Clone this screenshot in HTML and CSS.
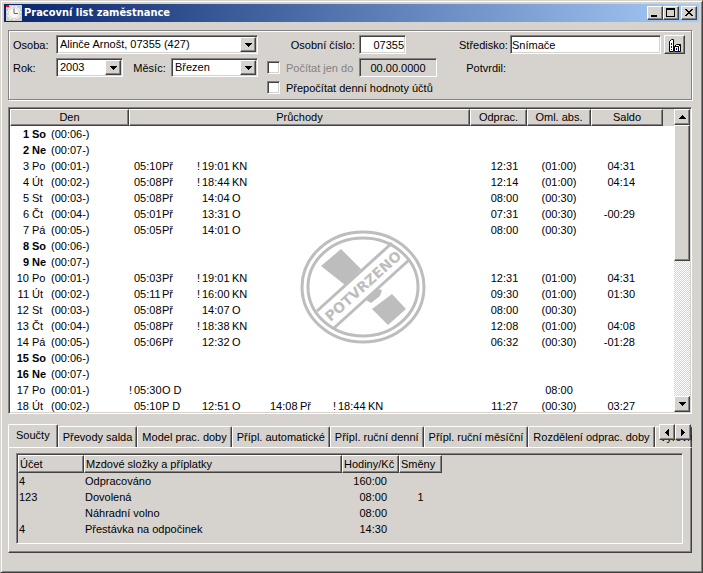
FILE: index.html
```html
<!DOCTYPE html>
<html lang="cs">
<head>
<meta charset="utf-8">
<title>Pracovní list zaměstnance</title>
<link rel="stylesheet" href="styles.css">
</head>
<body>
<main class="window">
  <header class="titlebar">
    <svg class="app-icon" viewBox="0 0 16 16" aria-hidden="true">
      <rect width="16" height="16" fill="#d0d0d0"/>
      <circle cx="8" cy="8" r="7" fill="#fff" stroke="#b8b8b8" stroke-dasharray="2 2"/>
      <circle cx="8" cy="8" r="5.500" fill="#f8f8f8" stroke="#d0d0d0"/>
      <path d="M8 3.500V8.500h4" fill="none" stroke="#666"/>
      <path d="M0 0h3v2h-3z" fill="#f00"/>
    </svg>
    <h1>Pracovní list zaměstnance</h1>
    <button class="raised caption" aria-label="Minimalizovat"><svg viewBox="0 0 12 10"><path d="M2 7h6v2h-6z"/></svg></button>
    <button class="raised caption" aria-label="Maximalizovat"><svg viewBox="0 0 12 10"><path d="M1 0h9v9H1zM2 2v6h7V2z" fill-rule="evenodd"/></svg></button>
    <button class="raised caption close" aria-label="Zavřít"><svg viewBox="0 0 12 10"><path d="M2 1h2v1h1v1h2V2h1V1h2v1H9v1H8v1H7v1h1v1h1v1h1v1H8V7H7V6H5v1H4v1H2V7h1V6h1V5h1V4H4V3H3V2H2z"/></svg></button>
  </header>

  <form class="filters">
    <label for="osoba">Osoba:</label>
    <span class="combo"><select id="osoba"><option>Alinče Arnošt, 07355 (427)</option></select><span class="raised drop"><svg viewBox="0 0 7 4"><path d="M0 0h7v1H6v1H5v1H4v1H3V3H2V2H1V1H0z"/></svg></span></span>
    <label class="right" for="cislo">Osobní číslo:</label>
    <input class="field number" id="cislo" value="07355">
    <label class="right" for="stredisko">Středisko:</label>
    <input class="field" id="stredisko" value="Snímače">
    <button type="button" class="raised lookup" aria-label="Vybrat středisko">
      <svg viewBox="0 0 14 14"><path d="M1.500 3.500l2-2h2v12h-4z" fill="#fff" stroke="#000"/><path d="M6.500 8.500l2-2h4v7h-6z" fill="#fff" stroke="#000"/><path d="M6.500 8.500h4l2-2M10.500 8.500v5" stroke="#000" fill="none"/><path d="M3 5h1v2H3zM3 8h1v2H3zM3 11h1v1H3zM8 10h1v2H8z" fill="#00f"/></svg>
    </button>

    <label for="rok">Rok:</label>
    <div class="period">
      <span class="combo year"><select id="rok"><option>2003</option></select><span class="raised drop"><svg viewBox="0 0 7 4"><path d="M0 0h7v1H6v1H5v1H4v1H3V3H2V2H1V1H0z"/></svg></span></span>
      <label for="mesic">Měsíc:</label>
      <span class="combo month"><select id="mesic"><option>Březen</option></select><span class="raised drop"><svg viewBox="0 0 7 4"><path d="M0 0h7v1H6v1H5v1H4v1H3V3H2V2H1V1H0z"/></svg></span></span>
    </div>
    <label class="check dim"><input type="checkbox">Počítat jen do</label>
    <input class="field date" aria-label="Počítat do data" value="00.00.0000" readonly>
    <span class="right">Potvrdil:</span>

    <label class="check wide"><input type="checkbox">Přepočítat denní hodnoty účtů</label>
  </form>

  <section class="days">
    <div class="days-view">
      <table class="grid">
        <colgroup><col class="c-day"><col><col class="c-work"><col class="c-abs"><col class="c-saldo"><col class="c-rest"></colgroup>
        <thead><tr><th>Den</th><th>Průchody</th><th>Odprac.</th><th>Oml. abs.</th><th>Saldo</th><td></td></tr></thead>
        <tbody id="days"></tbody>
      </table>
      <svg class="stamp" viewBox="0 0 126 116" role="img" aria-label="Potvrzeno">
        <g fill="none" stroke="#bdbdbd" stroke-width="3">
          <ellipse cx="63" cy="58" rx="61" ry="55"/>
          <ellipse cx="63" cy="58" rx="55" ry="49"/>
          <path d="M17 82L92 14M34 99L109 31"/>
        </g>
        <g fill="#bdbdbd">
          <path d="M21 37L41 20l20 20L45 56z"/>
          <path d="M72 80L92 65l14 15L88 96zM66 71l12-11 4 1-2 6-9 7z"/>
          <text x="63" y="62" text-anchor="middle" transform="rotate(-42 63 57)">POTVRZENO</text>
        </g>
      </svg>
    </div>
    <div class="scrollbar">
      <button class="raised" aria-label="Nahoru"><svg viewBox="0 0 7 4"><path d="M3 0h1v1h1v1h1v1h1v1H0V3h1V2h1V1h1z"/></svg></button>
      <div class="track"><div class="raised thumb"></div></div>
      <button class="raised" aria-label="Dolů"><svg viewBox="0 0 7 4"><path d="M0 0h7v1H6v1H5v1H4v1H3V3H2V2H1V1H0z"/></svg></button>
    </div>
  </section>

  <section class="totals">
    <nav class="tabs" role="tablist">
      <button class="tab active" role="tab" aria-selected="true">Součty</button>
      <button class="tab" role="tab">Převody salda</button>
      <button class="tab" role="tab">Model prac. doby</button>
      <button class="tab" role="tab">Přípl. automatické</button>
      <button class="tab" role="tab">Přípl. ruční denní</button>
      <button class="tab" role="tab">Přípl. ruční měsíční</button>
      <button class="tab" role="tab">Rozdělení odprac. doby</button>
      <button class="tab last" role="tab">Vyrovn</button>
      <span class="tab-scroll">
        <button class="raised" aria-label="Předchozí záložky"><svg viewBox="0 0 4 7"><path d="M4 0v7H3V6H2V5H1V4H0V3h1V2h1V1h1V0z"/></svg></button>
        <button class="raised" aria-label="Další záložky"><svg viewBox="0 0 4 7"><path d="M0 0v7h1V6h1V5h1V4h1V3H3V2H2V1H1V0z"/></svg></button>
      </span>
    </nav>
    <div class="panel">
      <div class="sums-view">
        <table class="grid sums">
          <colgroup><col class="s-account"><col class="s-item"><col class="s-hours"><col class="s-shifts"></colgroup>
          <thead><tr><th>Účet</th><th>Mzdové složky a příplatky</th><th>Hodiny/Kč</th><th>Směny</th></tr></thead>
          <tbody>
            <tr><td>4</td><td>Odpracováno</td><td>160:00</td><td></td></tr>
            <tr><td>123</td><td>Dovolená</td><td>08:00</td><td>1</td></tr>
            <tr><td></td><td>Náhradní volno</td><td>08:00</td><td></td></tr>
            <tr><td>4</td><td>Přestávka na odpočinek</td><td>14:30</td><td></td></tr>
          </tbody>
        </table>
      </div>
    </div>
  </section>
</main>
<script src="days.js"></script>
</body>
</html>
```
FILE: styles.css
```css
* { box-sizing: border-box; }

:root {
  --face: #d6d3ce;
  --light: #fff;
  --shadow: #848284;
  --dark: #424142;
}

body {
  margin: 0;
  background: var(--face);
  color: #000;
  font: 11px/16px "Liberation Sans", Arial, sans-serif;
}

button, input, select {
  margin: 0;
  padding: 0;
  border-radius: 0;
  color: inherit;
  font: inherit;
}

svg { display: block; }

.window {
  display: flex;
  flex-direction: column;
  height: 100vh;
  padding: 2px;
  border: 1px solid;
  border-color: var(--face) var(--dark) var(--dark) var(--face);
  box-shadow: inset 1px 1px var(--light), inset -1px -1px var(--shadow);
}

.raised {
  display: flex;
  align-items: center;
  justify-content: center;
  border: 1px solid;
  border-color: var(--light) var(--dark) var(--dark) var(--light);
  background: var(--face);
  box-shadow: inset -1px -1px var(--shadow);
}

/* Title bar */
.titlebar {
  display: flex;
  align-items: center;
  height: 18px;
  margin: 1px;
  padding: 0 2px;
  background: linear-gradient(to right, #08246b, #a5cbf7);
}

.app-icon { width: 16px; height: 16px; }

.titlebar h1 {
  flex: 1;
  margin: 0 0 0 2px;
  color: #fff;
  font: bold 11px/16px "DejaVu Sans Condensed", "DejaVu Sans", sans-serif;
}

.caption { width: 16px; height: 14px; }
.caption svg { width: 12px; height: 10px; }
.close { margin-left: 2px; }

/* Filters */
.filters {
  display: grid;
  grid-template-columns: 43px 202px 101px 100px 51px 1fr 24px;
  row-gap: 4px;
  align-items: center;
  margin: 7px 8px 0 5px;
  padding: 4px 6px 5px 4px;
  border: 1px solid var(--shadow);
  box-shadow: inset 1px 1px var(--light), 1px 1px var(--light);
}

.right { padding-right: 4px; text-align: right; }

.field, .combo {
  height: 19px;
  border: 1px solid;
  border-color: var(--shadow) var(--light) var(--light) var(--shadow);
  background: #fff;
  box-shadow: inset 1px 1px var(--dark), inset -1px -1px var(--face);
}

.field { width: 100%; min-width: 0; padding: 0 1px; }
.number { width: 47px; text-align: right; }
.date { width: 78px; background: var(--face); text-align: center; }

.combo { position: relative; display: block; }

.combo select {
  width: 100%;
  height: 100%;
  padding: 0 18px 2px 3px;
  border: 0;
  background: transparent;
  appearance: none;
}

.drop {
  position: absolute;
  top: 1px;
  right: 1px;
  bottom: 1px;
  width: 16px;
  pointer-events: none;
}

.drop svg, .scrollbar svg { width: 7px; height: 4px; }

.period { display: flex; align-items: center; justify-content: space-between; }
.year { width: 67px; }
.month { width: 87px; }
.period label { margin-left: 5px; }

.lookup { width: 21px; height: 19px; margin-left: 3px; }
.lookup svg { width: 14px; height: 14px; }

.check {
  display: flex;
  align-items: center;
  gap: 6px;
  height: 13px;
  padding-left: 9px;
  white-space: nowrap;
}

.check input {
  width: 13px;
  height: 13px;
  border: 1px solid;
  border-color: var(--shadow) var(--light) var(--light) var(--shadow);
  background: #fff;
  box-shadow: inset 1px 1px var(--dark), inset -1px -1px var(--face);
  appearance: none;
}

.dim { color: var(--shadow); }
.wide { grid-column: 3 / span 3; }

/* Day list */
.days {
  display: flex;
  flex: 1;
  min-height: 0;
  margin: 7px 8px 0 5px;
  padding: 1px;
  border: 1px solid;
  border-color: var(--shadow) var(--light) var(--light) var(--shadow);
  background: #fff;
  box-shadow: inset 1px 1px var(--dark), inset -1px -1px var(--face);
}

.days-view { position: relative; flex: 1; min-width: 0; overflow: hidden; }

.grid {
  width: 100%;
  border-collapse: separate;
  border-spacing: 0;
  table-layout: fixed;
}

.grid th {
  height: 17px;
  padding: 0;
  border: 1px solid;
  border-color: var(--light) var(--dark) var(--dark) var(--light);
  background: var(--face);
  box-shadow: inset -1px -1px var(--shadow);
  font-weight: normal;
  line-height: 15px;
}

.grid thead td { background: var(--face); }
.grid td { height: 16px; padding: 0; text-align: center; white-space: nowrap; }

.c-day { width: 119px; }
.c-work { width: 57px; }
.c-abs { width: 64px; }
.c-saldo { width: 72px; }
.c-rest { width: 11px; }

.grid .day, .grid .passes { text-align: left; }
.grid .work { padding-left: 12px; }
.grid .saldo { padding-right: 28px; text-align: right; }

.day-line {
  display: grid;
  grid-template-columns: 19px 16px 1fr;
  column-gap: 3px;
}

.day-line :first-child { text-align: right; }

.pass-line { display: grid; grid-template-columns: 68px 68px 68px 68px; }
.pass { display: grid; grid-template-columns: 5px 30px 1fr; }
.pass:first-child { grid-template-columns: 5px 28px 1fr; }

.stamp {
  position: absolute;
  top: 120px;
  left: calc(50% - 42px);
  width: 126px;
  height: 116px;
}

.stamp text { font: bold 14px "DejaVu Sans", sans-serif; }

.scrollbar { display: flex; flex-direction: column; width: 16px; }
.scrollbar button { height: 16px; }

.track {
  flex: 1;
  background: repeating-conic-gradient(#fff 0 25%, var(--face) 0 50%) 0 0 / 2px 2px;
}

.thumb { height: 50%; }

/* Totals */
.totals { margin: 10px 8px 17px 5px; }

.tabs {
  position: relative;
  display: flex;
  align-items: flex-end;
  overflow: hidden;
}

.tab {
  flex: none;
  height: 21px;
  padding: 0 4px 1px;
  border: 0 solid var(--light);
  border-width: 1px 1px 0 1px;
  border-right-color: var(--dark);
  border-radius: 2px 2px 0 0;
  background: var(--face);
  box-shadow: inset -1px 0 var(--shadow);
}

.active { height: 23px; padding: 0 7px 3px; }
.last { flex: 1; min-width: 0; padding-right: 0; text-align: left; }

.tab-scroll { position: absolute; top: 0; right: 1px; display: flex; }
.tab-scroll button { width: 16px; height: 16px; }
.tab-scroll svg { width: 4px; height: 7px; }

.panel {
  padding: 5px 8px 8px 7px;
  border: 1px solid;
  border-color: var(--light) var(--dark) var(--dark) var(--light);
  box-shadow: inset -1px -1px var(--shadow);
}

.sums-view {
  height: 91px;
  padding: 1px;
  border: 1px solid;
  border-color: var(--shadow) var(--light) var(--light) var(--shadow);
  box-shadow: inset 1px 1px var(--dark);
}

.sums { width: auto; }
.s-account { width: 66px; }
.s-item { width: 258px; }
.s-hours { width: 57px; }
.s-shifts { width: 43px; }

.sums th { height: 18px; padding: 0 1px; text-align: left; }
.sums td { padding: 0 1px; text-align: left; }
.sums td:nth-child(3) { padding-right: 12px; text-align: right; }
.sums td:nth-child(4) { text-align: center; }
```
FILE: days.js
```js
// day number, name, shift code, passes [flag, time, code], worked, absence, balance
const days = [
  [1, "So", "00:06-", [], "", "", ""],
  [2, "Ne", "00:07-", [], "", "", ""],
  [3, "Po", "00:01-", [["", "05:10", "Př"], ["!", "19:01", "KN"]], "12:31", "(01:00)", "04:31"],
  [4, "Út", "00:02-", [["", "05:08", "Př"], ["!", "18:44", "KN"]], "12:14", "(01:00)", "04:14"],
  [5, "St", "00:03-", [["", "05:08", "Př"], ["", "14:04", "O"]], "08:00", "(00:30)", ""],
  [6, "Čt", "00:04-", [["", "05:01", "Př"], ["", "13:31", "O"]], "07:31", "(00:30)", "-00:29"],
  [7, "Pá", "00:05-", [["", "05:05", "Př"], ["", "14:01", "O"]], "08:00", "(00:30)", ""],
  [8, "So", "00:06-", [], "", "", ""],
  [9, "Ne", "00:07-", [], "", "", ""],
  [10, "Po", "00:01-", [["", "05:03", "Př"], ["!", "19:01", "KN"]], "12:31", "(01:00)", "04:31"],
  [11, "Út", "00:02-", [["", "05:11", "Př"], ["!", "16:00", "KN"]], "09:30", "(01:00)", "01:30"],
  [12, "St", "00:03-", [["", "05:08", "Př"], ["", "14:07", "O"]], "08:00", "(00:30)", ""],
  [13, "Čt", "00:04-", [["", "05:08", "Př"], ["!", "18:38", "KN"]], "12:08", "(01:00)", "04:08"],
  [14, "Pá", "00:05-", [["", "05:06", "Př"], ["", "12:32", "O"]], "06:32", "(00:30)", "-01:28"],
  [15, "So", "00:06-", [], "", "", ""],
  [16, "Ne", "00:07-", [], "", "", ""],
  [17, "Po", "00:01-", [["!", "05:30", "O D"]], "", "08:00", ""],
  [18, "Út", "00:02-", [["", "05:10", "P D"], ["", "12:51", "O"], ["", "14:08", "Př"], ["!", "18:44", "KN"]], "11:27", "(00:30)", "03:27"]
];

document.getElementById("days").innerHTML = days.map(([number, name, shift, passes, work, absence, saldo]) => {
  const tag = name === "So" || name === "Ne" ? "b" : "span";
  const passCells = passes.map(pass => `<span class="pass">${pass.map(part => `<span>${part}</span>`).join("")}</span>`).join("");
  return `<tr>
    <td class="day"><div class="day-line"><${tag}>${number}</${tag}><${tag}>${name}</${tag}><span>(${shift})</span></div></td>
    <td class="passes"><div class="pass-line">${passCells}</div></td>
    <td class="work">${work}</td><td>${absence}</td><td class="saldo">${saldo}</td><td></td>
  </tr>`;
}).join("");
```
